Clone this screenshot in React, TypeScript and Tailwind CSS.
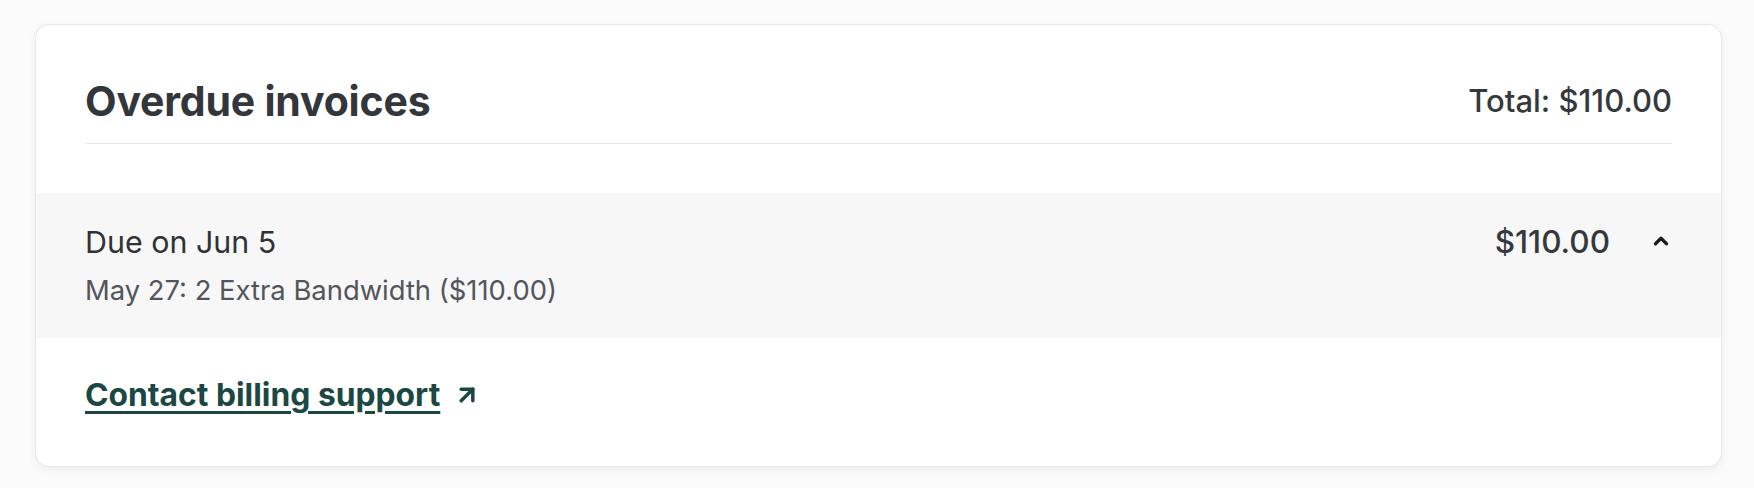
import React from "react";
import { ArrowUpRight, ChevronUp } from "lucide-react";

function OverdueInvoices() {
  return (
    <section className="bg-white rounded-[14px] border border-[#e8e8e8] shadow-[0_3px_10px_rgba(0,0,0,0.06)] overflow-hidden">
      <div className="px-[49px]">
        <div className="flex items-center justify-between pt-[54px] pb-[20px] border-b border-[#e6e6e6]">
          <h2 className="text-[41px] leading-[44px] font-bold text-[#33363a] tracking-[-0.2px]">
            Overdue invoices
          </h2>
          <span className="text-[31px] leading-[44px] font-medium text-[#35383c]">
            Total: $110.00
          </span>
        </div>
      </div>

      <div className="mt-[49px] bg-[#f7f7f7] px-[49px] pt-[31px] pb-[32px] flex justify-between">
        <div>
          <p className="text-[30.4px] leading-[36px] text-[#2f3236]">Due on Jun 5</p>
          <p className="mt-[14px] text-[27.4px] leading-[32px] text-[#52565c]">
            May 27: 2 Extra Bandwidth ($110.00)
          </p>
        </div>
        <div className="flex items-start gap-[40px]">
          <span className="text-[31.5px] leading-[36px] font-medium text-[#35383c]">$110.00</span>
          <ChevronUp className="mt-[6px] w-[22px] h-[22px] text-[#1a1a1a]" strokeWidth={3.5} />
        </div>
      </div>

      <div className="px-[49px] pt-[39px] pb-[53px]">
        <a href="#" className="inline-flex items-center gap-[13px] text-[#1c4844]">
          <span className="text-[31.8px] leading-[36px] font-bold underline decoration-[3px] underline-offset-[5px]">
            Contact billing support
          </span>
          <ArrowUpRight className="w-[28px] h-[28px]" strokeWidth={3} />
        </a>
      </div>
    </section>
  );
}

export default function App() {
  return (
    <div className="min-h-screen bg-[#fbfbfb] pt-[24px] pl-[35px] pr-[32px] pb-[24px]" style={{ fontFamily: "Inter, 'Noto Sans', sans-serif" }}>
      <OverdueInvoices />
    </div>
  );
}
